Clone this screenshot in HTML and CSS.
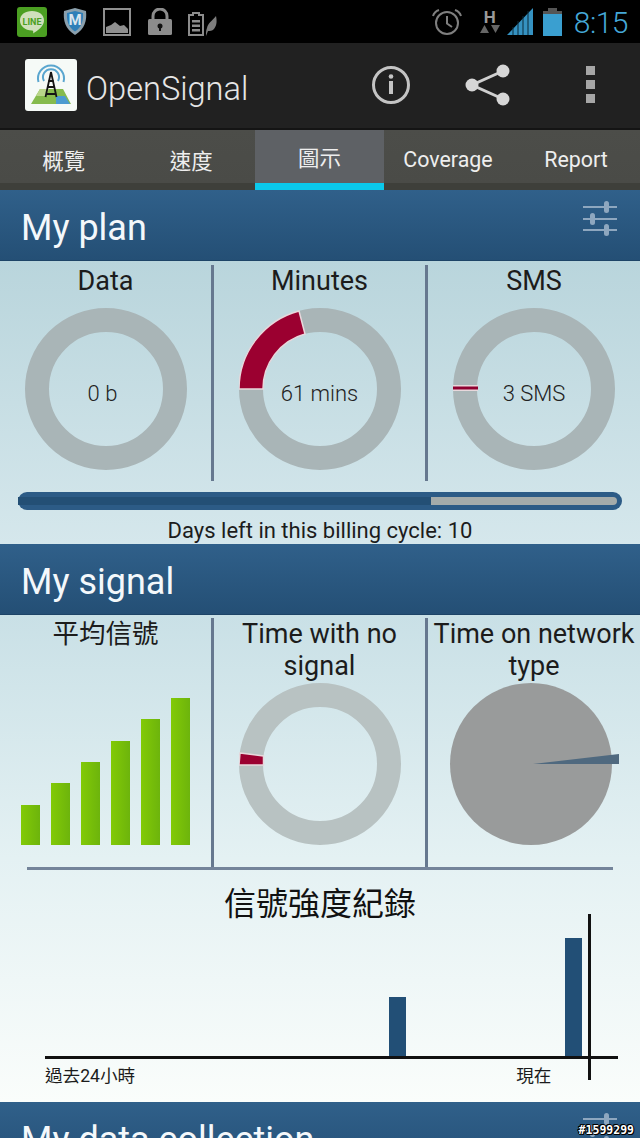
FILE: index.html
```html
<!DOCTYPE html>
<html lang="en">

<head>
    <meta charset="UTF-8">
    <meta name="viewport" content="width=device-width, initial-scale=1.0">
    <title>OpenSignal</title>
    <link rel="stylesheet" href="styles.css">
</head>

<body>
    <svg class="defs" width="0" height="0">
        <symbol id="sliders" viewBox="0 0 34 36">
            <g fill="#8ea7bf">
                <rect x="0" y="5" width="34" height="2"/>
                <rect x="0" y="17" width="34" height="2"/>
                <rect x="0" y="28" width="34" height="2"/>
                <rect x="21" y="0" width="5" height="12" rx="2.5"/>
                <rect x="7" y="12" width="5" height="12" rx="2.5"/>
                <rect x="21" y="23" width="5" height="12" rx="2.5"/>
            </g>
        </symbol>
    </svg>

    <div class="status-bar">
        <div class="status-left">
            <svg class="icon-line" width="30" height="30" viewBox="0 0 30 30">
                <rect width="30" height="30" rx="3" fill="#4b9f22"/>
                <path d="M15 4c7 0 12 3.800 12 9.500 0 5.500-6 10-11 13 .5-1.500.5-3-1-3C8 23.500 3 19 3 13.500 3 7.800 8 4 15 4z" fill="#cfe0bb"/>
                <text x="15" y="17.500" class="line-text">LINE</text>
            </svg>
            <svg class="icon-shield" width="24" height="27" viewBox="0 0 24 27">
                <path d="M12 0l11 3c1 9-1 18-11 24C2 21 0 12 1 3z" fill="#8ba0ad"/>
                <path d="M12 3l8 2c.5 7-1 14-8 18.500C5 19 3.500 12 4 5z" fill="#2f7fb8"/>
                <text x="12" y="17" class="shield-text">M</text>
            </svg>
            <svg class="icon-photo" width="28" height="28" viewBox="0 0 28 28">
                <rect x="1" y="1" width="26" height="26" fill="none" stroke="#8f8f8f" stroke-width="2"/>
                <path d="M3 25v-6l5-2 4-3 5 4 4-1 4 4v4z" fill="#8f8f8f"/>
            </svg>
            <svg class="icon-lock" width="24" height="27" viewBox="0 0 24 27">
                <path d="M5 12V8a7 7 0 0 1 14 0v4" fill="none" stroke="#8c8c8c" stroke-width="3"/>
                <rect y="11" width="24" height="16" rx="1.500" fill="#8c8c8c"/>
                <circle cx="12" cy="18" r="2.500" fill="#111"/>
                <rect x="11" y="18" width="2" height="5" fill="#111"/>
            </svg>
            <svg class="icon-eco" width="30" height="24" viewBox="0 0 30 24">
                <path d="M5 1h6v2h4v20H1V3h4z" fill="none" stroke="#8c8c8c" stroke-width="2"/>
                <path d="M4 8h8v2.500H4zM4 12.500h8V15H4zM4 17h8v2.500H4z" fill="#8c8c8c"/>
                <path d="M18 24c0-4 0-5 1-8 1-5 5-7 9-12 1 5 1 9-2 13-2 2-4 2-6 2z" fill="#7d7d7d"/>
            </svg>
        </div>
        <div class="status-right">
            <svg class="icon-alarm" width="30" height="28" viewBox="0 0 30 28">
                <circle cx="15" cy="15" r="11" fill="none" stroke="#7f7f7f" stroke-width="2"/>
                <path d="M15 8v7.500l5 3.500" fill="none" stroke="#7f7f7f" stroke-width="2"/>
                <path d="M1 8c1-3 3-5 6-6M29 8c-1-3-3-5-6-6" fill="none" stroke="#7f7f7f" stroke-width="2"/>
            </svg>
            <div class="net-type">
                <span class="net-h">H</span>
                <svg width="20" height="9" viewBox="0 0 20 9">
                    <path d="M0 8l4.500-8L9 8zM11 0h9l-4.500 8z" fill="#666"/>
                </svg>
            </div>
            <svg class="icon-signal" width="26" height="28" viewBox="0 0 26 28">
                <path d="M0 27L26 0v27z" fill="#3592c2"/>
                <path d="M6 27v-8M11 27V13M16 27V8M21 27V3" stroke="#0b2a3a" stroke-width="1"/>
            </svg>
            <svg class="icon-battery" width="19" height="28" viewBox="0 0 19 28">
                <rect x="5" y="0" width="9" height="3" fill="#555"/>
                <rect y="3" width="19" height="3" fill="#555"/>
                <rect y="6" width="19" height="22" fill="#3a9fd0"/>
            </svg>
            <span class="clock">8:15</span>
        </div>
    </div>

    <div class="action-bar">
        <svg class="app-icon" width="52" height="52" viewBox="0 0 52 52">
            <rect width="52" height="52" rx="3" fill="#f6faf7"/>
            <path d="M6 45l9-15h23l8 15z" fill="#86bb4d"/>
            <path d="M15 30h9l-3 7H11z" fill="#b9d58a"/>
            <path d="M31 37h9l5 8H31z" fill="#4d9bd0"/>
            <g fill="none" stroke="#5aa6cf" stroke-width="2">
                <path d="M13.500 23a13 13 0 1 1 25 0"/>
                <path d="M19 22a8 8 0 1 1 14 0"/>
            </g>
            <g fill="none" stroke="#141414" stroke-width="1.800">
                <path d="M26 13l-5.500 25M26 13l5.500 25"/>
                <path d="M23.500 22h5M22.500 28h7M21 35h10"/>
            </g>
        </svg>
        <span class="app-name">OpenSignal</span>
        <div class="actions">
            <svg class="info-icon" width="40" height="40" viewBox="0 0 40 40">
                <circle cx="20" cy="20" r="17.500" fill="none" stroke="#c4c4c4" stroke-width="3"/>
                <rect x="18" y="16" width="4" height="13" fill="#c4c4c4"/>
                <circle cx="20" cy="11.500" r="2.300" fill="#c4c4c4"/>
            </svg>
            <svg class="share-icon" width="45" height="42" viewBox="0 0 45 42">
                <path d="M38 7L7 21l31 14" fill="none" stroke="#d0d0d0" stroke-width="3"/>
                <circle cx="38" cy="7" r="6.500" fill="#d6d6d6"/>
                <circle cx="7" cy="21" r="6.500" fill="#d6d6d6"/>
                <circle cx="38" cy="35" r="6.500" fill="#d6d6d6"/>
            </svg>
            <div class="menu-dots"><i></i><i></i><i></i></div>
        </div>
    </div>

    <div class="tabs">
        <div class="tab">概覽</div>
        <div class="tab">速度</div>
        <div class="tab active">圖示</div>
        <div class="tab">Coverage</div>
        <div class="tab">Report</div>
    </div>

    <div class="section-header">
        <span>My plan</span>
        <svg class="sliders"><use href="#sliders"/></svg>
    </div>
    <div class="panel plan">
        <div class="cols plan-cols">
            <div class="col">
                <div class="col-title">Data</div>
                <div class="donut">
                    <svg width="162" height="162" viewBox="0 0 162 162">
                        <circle cx="81" cy="81" r="69" class="ring"/>
                    </svg>
                    <span class="donut-label data-label">0 b</span>
                </div>
            </div>
            <div class="col">
                <div class="col-title">Minutes</div>
                <div class="donut">
                    <svg width="162" height="162" viewBox="0 0 162 162">
                        <circle cx="81" cy="81" r="69" class="ring"/>
                        <path d="M0 81A81 81 0 0 1 60 3L66 26A57 57 0 0 0 24 81Z" class="slice"/>
                    </svg>
                    <span class="donut-label">61 mins</span>
                </div>
            </div>
            <div class="col">
                <div class="col-title">SMS</div>
                <div class="donut">
                    <svg width="162" height="162" viewBox="0 0 162 162">
                        <circle cx="81" cy="81" r="69" class="ring"/>
                        <rect x="0" y="77" width="25" height="6" fill="#e8d8dc"/>
                        <rect x="0" y="78.500" width="25" height="3" fill="#8f0030"/>
                    </svg>
                    <span class="donut-label">3 SMS</span>
                </div>
            </div>
        </div>
        <div class="progress"><div class="progress-used"></div><div class="progress-left"></div></div>
        <div class="billing">Days left in this billing cycle: 10</div>
    </div>

    <div class="section-header">
        <span>My signal</span>
    </div>
    <div class="panel signal">
        <div class="cols signal-cols">
            <div class="col">
                <div class="col-title two-line cjk-title">平均信號</div>
                <div class="bars">
                    <div class="bar bar-1"></div>
                    <div class="bar bar-2"></div>
                    <div class="bar bar-3"></div>
                    <div class="bar bar-4"></div>
                    <div class="bar bar-5"></div>
                    <div class="bar bar-6"></div>
                </div>
            </div>
            <div class="col">
                <div class="col-title two-line">Time with no signal</div>
                <div class="donut">
                    <svg width="162" height="162" viewBox="0 0 162 162">
                        <circle cx="81" cy="81" r="69" class="ring light"/>
                        <path d="M1 70L24.500 73V82H0Z" class="slice"/>
                    </svg>
                </div>
            </div>
            <div class="col">
                <div class="col-title two-line">Time on network type</div>
                <svg class="pie" width="172" height="162" viewBox="0 0 172 162">
                    <circle cx="83" cy="81" r="81" fill="#999b9b"/>
                    <path d="M85 81L171 71V81Z" fill="#4f697f"/>
                </svg>
            </div>
        </div>
        <div class="rule"></div>
        <div class="history-title">信號強度紀錄</div>
        <div class="history">
            <div class="history-bars">
                <div class="history-bar early"></div>
                <div class="history-bar late"></div>
            </div>
            <div class="history-labels">
                <span>過去24小時</span>
                <span class="now-label">現在</span>
            </div>
            <div class="now-line"></div>
        </div>
    </div>

    <div class="section-header">
        <span>My data collection</span>
        <svg class="sliders"><use href="#sliders"/></svg>
    </div>

    <div class="watermark">#1599299</div>
</body>

</html>
```

FILE: styles.css
```css
* {
    box-sizing: border-box;
}

html,
body {
    height: 1138px;
}

body {
    margin: 0;
    overflow: hidden;
    position: relative;
    font-family: Roboto, "Noto Sans CJK TC", sans-serif;
    background: #000;
    color: #1c1c1c;
}

svg {
    display: block;
}

.defs {
    position: absolute;
}

/* status bar */
.status-bar {
    height: 43px;
    background: #000;
    display: flex;
    justify-content: space-between;
    align-items: center;
    padding: 0 12px 0 17px;
}

.status-left,
.status-right {
    display: flex;
    align-items: center;
}

.icon-shield {
    margin-left: 16px;
}

.icon-photo {
    margin-left: 16px;
}

.icon-lock {
    margin-left: 17px;
}

.icon-eco {
    margin-left: 16px;
    margin-top: 4px;
}

.line-text {
    font: bold 9px Roboto, sans-serif;
    fill: #4b9f22;
    text-anchor: middle;
}

.shield-text {
    font: bold 15px Roboto, sans-serif;
    fill: #dbe6ee;
    text-anchor: middle;
}

.net-type {
    margin-left: 15px;
    width: 26px;
    display: flex;
    flex-direction: column;
    align-items: center;
    color: #9a9a9a;
}

.net-h {
    font-size: 17px;
    font-weight: bold;
    line-height: 16px;
}

.icon-signal {
    margin-left: 4px;
}

.icon-battery {
    margin-left: 10px;
}

.clock {
    margin-left: 12px;
    padding-top: 2px;
    font-size: 30px;
    font-weight: 300;
    letter-spacing: -0.5px;
    color: #45a8d8;
}

/* action bar */
.action-bar {
    height: 87px;
    background: #212121;
    border-bottom: 2px solid #141414;
    display: flex;
    align-items: center;
    padding: 0 0 2px 25px;
}

.app-name {
    margin-left: 9px;
    padding-top: 8px;
    font-size: 32.6px;
    font-weight: 300;
    color: #e6e6e6;
}

.actions {
    margin-left: auto;
    padding-right: 45px;
    display: flex;
    align-items: center;
}

.share-icon {
    margin-left: 54px;
}

.menu-dots {
    display: flex;
    flex-direction: column;
    gap: 5px;
    margin-left: 76px;
}

.menu-dots i {
    display: block;
    width: 9px;
    height: 9px;
    background: #a6a6a6;
}

/* tabs */
.tabs {
    height: 60px;
    background: linear-gradient(#4c4d49 0, #4a4b47 88%, #3e3f3a 88%);
    display: grid;
    grid-template-columns: 127.5px 127.5px 129px 128px 128px;
}

.tab {
    display: flex;
    align-items: center;
    justify-content: center;
    font-size: 21.4px;
    padding-bottom: 1px;
    color: #eee;
}

.tab.active {
    background: #5e6165;
    border-bottom: 7px solid #0bc9ec;
    padding-bottom: 0;
}

/* section headers */
.section-header {
    height: 71px;
    background: linear-gradient(#30608a, #244f75);
    border-bottom: 1px solid #1d4467;
    color: #f4f8fb;
    font-size: 36px;
    display: flex;
    justify-content: space-between;
    align-items: center;
    padding: 5px 23px 0 21px;
}

.sliders {
    width: 34px;
    height: 36px;
    margin-top: -18px;
}

/* panels */
.panel {
    background: linear-gradient(#b9d5dc, #d5e7ec);
}

.plan {
    height: 283px;
    padding-top: 4px;
}

.signal {
    height: 487px;
    padding-top: 3px;
    background: linear-gradient(#c9e0e6, #e4f1f3 50%, #fafdfb);
}

.cols {
    display: grid;
    grid-template-columns: 211px 214px 215px;
}

.plan-cols {
    height: 216px;
}

.signal-cols {
    height: 249px;
}

.col {
    display: flex;
    flex-direction: column;
    align-items: center;
    border-left: 3px solid #66788f;
}

.col:first-child {
    border-left: 0;
}

.col-title {
    font-size: 27px;
    line-height: 32px;
    text-align: center;
    white-space: nowrap;
}

.plan .col-title {
    margin-bottom: 11px;
}

.two-line {
    height: 64px;
    white-space: normal;
    margin-bottom: 1px;
}

.cjk-title {
    font-size: 26.5px;
}

.signal .col:last-child .two-line {
    width: 210px;
}

.signal .col:nth-child(2) .two-line {
    width: 170px;
}

/* donuts */
.donut {
    display: grid;
    place-items: center;
}

.donut svg,
.donut-label {
    grid-area: 1 / 1;
}

.donut-label {
    padding-top: 8px;
    font-size: 22px;
    font-weight: 300;
    color: #222;
}

.data-label {
    padding-right: 6px;
}

.ring {
    fill: none;
    stroke: #a9b5b7;
    stroke-width: 24;
}

.ring.light {
    stroke: #b8c2c2;
}

.slice {
    fill: #9b0030;
    stroke: #e8d8dc;
    stroke-width: 1.5;
}

.pie {
    align-self: flex-start;
    margin-left: 20px;
}

/* billing progress */
.progress {
    display: flex;
    height: 18px;
    margin: 11px 18px 0;
    padding: 5px 5px 5px 0;
    border-radius: 9px;
    background: #2c5b86;
}

.progress-used {
    width: 413px;
    background: #234f75;
}

.progress-left {
    flex: 1;
    background: #a4abaa;
    border-radius: 0 4px 4px 0;
}

.billing {
    margin-top: 8px;
    font-size: 22px;
    line-height: 26px;
    text-align: center;
}

/* signal bars */
.bars {
    display: flex;
    align-items: flex-end;
    gap: 11px;
    height: 162px;
    margin-left: -1px;
    padding-top: 15px;
}

.bar {
    width: 19px;
    background: linear-gradient(90deg, #82ca06, #6db40c);
}

.bar-1 {
    height: 40px;
}

.bar-2 {
    height: 62px;
}

.bar-3 {
    height: 83px;
}

.bar-4 {
    height: 104px;
}

.bar-5 {
    height: 126px;
}

.bar-6 {
    height: 147px;
}

/* history chart */
.rule {
    height: 3px;
    margin: 0 27px;
    background: #74849a;
}

.history-title {
    margin-top: 13px;
    font-size: 32px;
    line-height: 42px;
    text-align: center;
    color: #111;
}

.history {
    position: relative;
    margin: 0 22px 0 45px;
}

.history-bars {
    height: 137px;
    margin-top: -3px;
    display: flex;
    align-items: flex-end;
    padding-left: 344px;
    gap: 159px;
    border-bottom: 3px solid #111;
}

.history-bar {
    width: 17px;
    background: #224f76;
}

.history-bar.early {
    height: 59px;
}

.history-bar.late {
    height: 118px;
}

.history-labels {
    display: flex;
    padding-top: 5px;
    font-size: 17.6px;
    line-height: 24px;
}

.now-label {
    margin-left: 381px;
}

.now-line {
    position: absolute;
    left: 543px;
    top: -8px;
    bottom: 8px;
    width: 3px;
    background: #111;
}

.watermark {
    position: absolute;
    right: 6px;
    bottom: 1px;
    font-family: "DejaVu Sans Mono", monospace;
    font-size: 11.5px;
    font-weight: bold;
    line-height: 13px;
    color: #fff;
    text-shadow: 1px 0 0 #000, -1px 0 0 #000, 0 1px 0 #000, 0 -1px 0 #000, 1px 1px 0 #000, -1px -1px 0 #000;
}
```
